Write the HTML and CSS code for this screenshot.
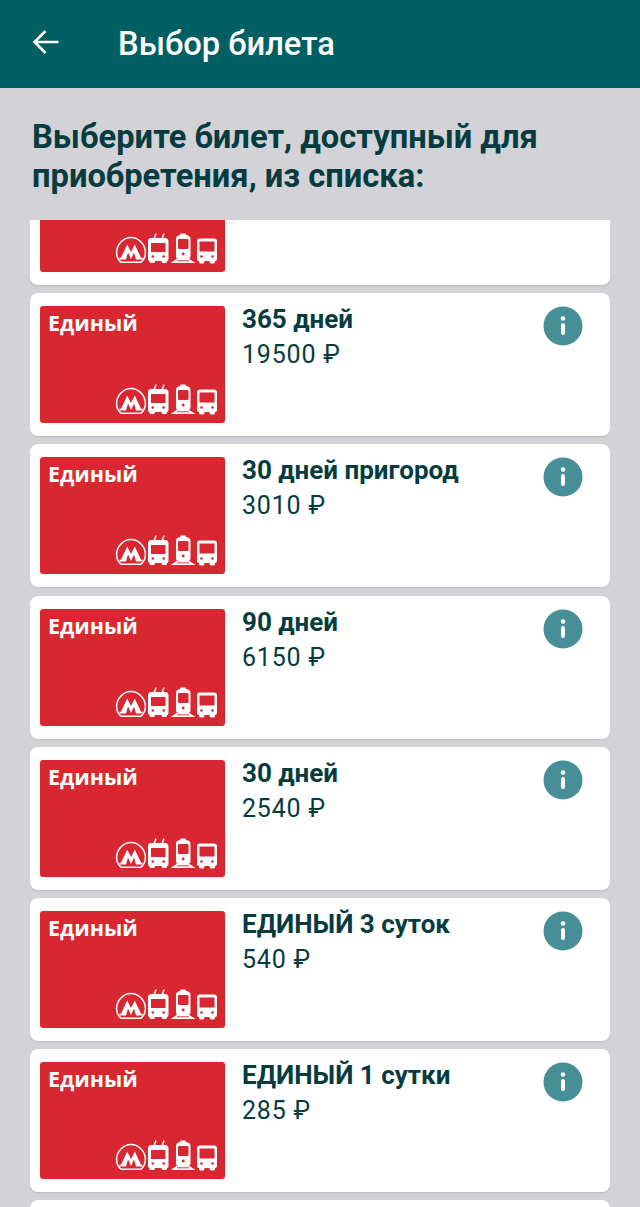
FILE: index.html
```html
<!DOCTYPE html>
<html lang="ru">
<head>
    <meta charset="UTF-8">
    <meta name="viewport" content="width=device-width, initial-scale=1.0">
    <title>Выбор билета</title>
    <link rel="stylesheet" href="styles.css">
</head>
<body>
    <svg class="defs" width="0" height="0">
        <symbol id="transport" viewBox="0 0 104 32">
            <!-- metro -->
            <path d="M6 30.200 C2.600 27.400 1.600 23.600 1.600 20.600 C1.600 12.400 8.200 5.400 16 5.400 C23.800 5.400 30.400 12.400 30.400 20.600 C30.400 23.600 29.400 27.400 26 30.200 Z" fill="none" stroke="#fff" stroke-width="1.500"/>
            <path d="M4.500 27.500 H11 L13 20.500 L16 27 L19 20.500 L21 27.500 H27.500 V25.800 H26 L19.800 12.500 L16 20 L12.200 12.500 L6 25.800 H4.500 Z" fill="#fff"/>
            <!-- trolleybus -->
            <path d="M39 7 L41 1.500 M47 7 L49 1.500" stroke="#fff" stroke-width="1.500" fill="none"/>
            <path d="M36 6 H50 Q53.500 6 53.500 9.500 V27 Q53.500 29 52 29 V30 Q52 31 50 31 H48 Q46.500 31 46.500 29 H40 Q40 31 38.500 31 H36.500 Q34.500 31 34.500 30 V29 Q33 29 33 27 V9.500 Q33 6 36 6 Z" fill="#fff"/>
            <rect x="36" y="11" width="14.500" height="9" fill="#d92731"/>
            <circle cx="37.800" cy="24.500" r="1.300" fill="#d92731"/>
            <circle cx="48.700" cy="24.500" r="1.300" fill="#d92731"/>
            <!-- train -->
            <path d="M61 7 Q61 3.500 65 3 L65.500 1.500 H70.500 L71 3 Q75.500 3.500 75.500 7 V24 Q75.500 26 74 26.800 L80.500 31 H55.500 L62 26.800 Q61 26 61 24 Z" fill="#fff"/>
            <rect x="63" y="7" width="10.500" height="10" rx="1" fill="#d92731"/>
            <circle cx="68.200" cy="22" r="1.400" fill="#d92731"/>
            <path d="M62 28.800 H74" stroke="#d92731" stroke-width="0.900"/>
            <!-- bus -->
            <path d="M85 6.500 H99 Q102 6.500 102 9.500 V27 Q102 29 100 29 V30 Q100 31.500 98 31.500 H96 Q94.500 31.500 94.500 29 H89.500 Q89.500 31.500 88 31.500 H86 Q84 31.500 84 30 V29 Q82 29 82 27 V9.500 Q82 6.500 85 6.500 Z" fill="#fff"/>
            <rect x="84.500" y="9.500" width="15" height="10" fill="#d92731"/>
            <circle cx="86.500" cy="24.500" r="1.300" fill="#d92731"/>
            <circle cx="97.500" cy="24.500" r="1.300" fill="#d92731"/>
        </symbol>
    </svg>

    <header class="topbar">
        <svg class="back" width="28" height="28" viewBox="0 0 28 28">
            <path d="M26.500 14 H3 M13.500 3 L2.500 14 L13.500 25" fill="none" stroke="#fff" stroke-width="2.600"/>
        </svg>
        <h1>Выбор билета</h1>
    </header>

    <h2 class="lead">Выберите билет, доступный для приобретения, из списка:</h2>

    <div class="list" id="tickets"></div>

    <script>
        const tickets = [
            ['365 дней', '19500'],
            ['30 дней пригород', '3010'],
            ['90 дней', '6150'],
            ['30 дней', '2540'],
            ['ЕДИНЫЙ 3 суток', '540'],
            ['ЕДИНЫЙ 1 сутки', '285']
        ];

        const list = document.getElementById('tickets');
        const modes = '<svg class="modes"><use href="#transport"/></svg>';

        // Card scrolled away under the heading, only its lower part shows
        const scrolled = document.createElement('div');
        scrolled.classList.add('ticket');
        scrolled.innerHTML = `<div class="card">${modes}</div>`;
        list.appendChild(scrolled);

        tickets.forEach((ticket) => {
            const item = document.createElement('div');
            item.classList.add('ticket');
            item.innerHTML = `
                <div class="card"><span>Единый</span>${modes}</div>
                <div class="info">
                    <div class="name">${ticket[0]}</div>
                    <div class="price">${ticket[1]} ₽</div>
                </div>
                <svg class="more" width="40" height="40" viewBox="0 0 40 40">
                    <circle cx="20" cy="20" r="19.500" fill="#468f96"/>
                    <circle cx="20" cy="12.500" r="2.300" fill="#fff"/>
                    <rect x="18" y="17" width="4" height="12" rx="2" fill="#fff"/>
                </svg>`;
            list.appendChild(item);
        });

        // Next card, only its top edge shows at the bottom of the screen
        const next = document.createElement('div');
        next.classList.add('ticket');
        list.appendChild(next);
    </script>
</body>
</html>
```

FILE: styles.css
```css
/* page */
body {
    margin: 0;
    height: 1207px;
    overflow: hidden;
    font-family: Roboto, "Noto Sans", sans-serif;
    background-color: #d2d2d7;
    color: #063c40;
}

.defs {
    display: block;
    height: 0;
}

/* top bar */
.topbar {
    display: flex;
    align-items: center;
    height: 88px;
    padding-left: 32px;
    box-sizing: border-box;
    background-color: #005f63;
}

.back {
    margin-top: -4px;
}

.topbar h1 {
    margin: 0 0 0 58px;
    font-size: 32.700px;
    font-weight: 500;
    color: #fff;
}

.lead {
    margin: 0;
    padding: 30px 32px 24px;
    box-sizing: border-box;
    height: 132px;
    font-size: 32.700px;
    line-height: 39px;
    font-weight: 700;
}

/* ticket list */
.list {
    height: 987px;
    margin: 0 30px;
    overflow: hidden;
}

.ticket {
    display: flex;
    height: 143px;
    margin-bottom: 8.200px;
    padding: 13px 10px;
    box-sizing: border-box;
    background-color: #fff;
    border-radius: 8px;
    box-shadow: 0 1px 2px rgba(0, 0, 0, 0.12);
}

.ticket:first-child {
    margin-top: -77.900px;
}

.card {
    position: relative;
    flex: none;
    width: 185px;
    height: 117px;
    box-sizing: border-box;
    padding: 2px 8px;
    background-color: #d92731;
    border-radius: 3px;
    color: #fff;
    font-size: 21.500px;
    font-weight: 700;
    font-family: "Open Sans", sans-serif;
}

.modes {
    position: absolute;
    right: 6px;
    bottom: 8px;
    width: 104px;
    height: 32px;
}

.info {
    flex: 1;
    margin-left: 17px;
}

.name {
    font-size: 26px;
    font-weight: 700;
    line-height: 26px;
}

.price {
    margin-top: 9px;
    font-size: 25px;
    line-height: 28px;
    letter-spacing: 0.800px;
}

.more {
    flex: none;
    margin-right: 17px;
}
```
